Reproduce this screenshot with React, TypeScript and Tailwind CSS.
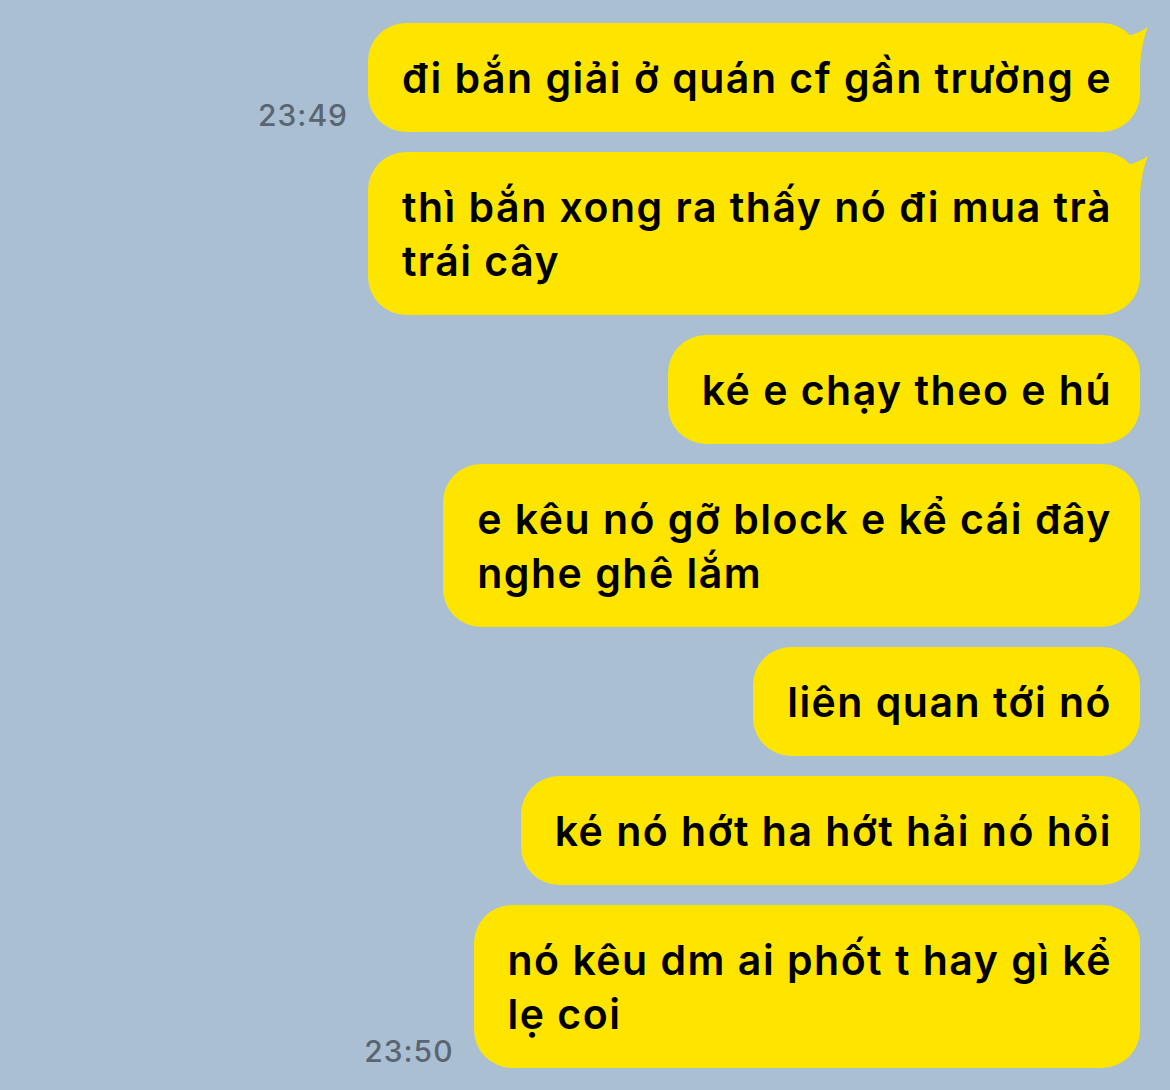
const MESSAGES: { lines: string[]; time?: string; tail?: boolean }[] = [
  { lines: ["đi bắn giải ở quán cf gần trường e"], time: "23:49", tail: true },
  { lines: ["thì bắn xong ra thấy nó đi mua trà", "trái cây"], tail: true },
  { lines: ["ké e chạy theo e hú"] },
  { lines: ["e kêu nó gỡ block e kể cái đây", "nghe ghê lắm"] },
  { lines: ["liên quan tới nó"] },
  { lines: ["ké nó hớt ha hớt hải nó hỏi"] },
  { lines: ["nó kêu dm ai phốt t hay gì kể", "lẹ coi"], time: "23:50" },
];

function Bubble({ lines, tail }: { lines: string[]; tail?: boolean }) {
  return (
    <div className="relative rounded-[38px] bg-[#fee500] py-[27.5px] pl-[34px] pr-[28px]">
      {tail && (
        <svg
          aria-hidden
          width="40"
          height="45"
          viewBox="0 0 40 45"
          className="absolute right-[-10px] top-[-3px]"
        >
          <path d="M8,8 L18,16 Q29,13 38,7 Q32,20 30,44 L8,44 Z" fill="#fee500" />
        </svg>
      )}
      {lines.map((l, i) => (
        <div
          key={i}
          className="whitespace-nowrap text-[41px] font-semibold leading-[54px] tracking-[1.5px] text-black"
        >
          {l}
        </div>
      ))}
    </div>
  );
}

export default function App() {
  return (
    <div
      className="flex min-h-[1090px] w-[1170px] flex-col items-end gap-5 bg-[#aabfd2] pr-[30px] pt-[23px]"
      style={{ fontFamily: "Inter, 'Noto Sans', sans-serif" }}
    >
      {MESSAGES.map((m, i) => (
        <div key={i} className="flex items-end gap-5">
          {m.time && (
            <span className="pb-[2px] text-[30px] font-medium leading-none tracking-[1px] text-[#5a6572]">
              {m.time}
            </span>
          )}
          <Bubble lines={m.lines} tail={m.tail} />
        </div>
      ))}
    </div>
  );
}
